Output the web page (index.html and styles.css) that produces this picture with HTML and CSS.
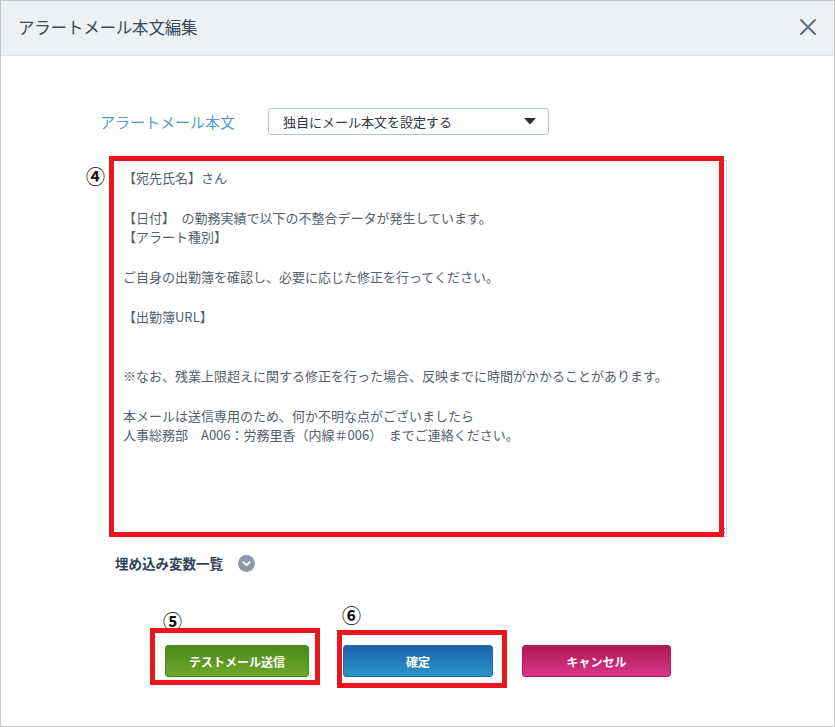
FILE: index.html
```html
<!DOCTYPE html>
<html lang="ja">
<head>
<meta charset="utf-8">
<title>アラートメール本文編集</title>
<link rel="stylesheet" href="styles.css">
</head>
<body>
<div class="dialog">
  <header class="dlg-head">
    <h1 class="dlg-title">アラートメール本文編集</h1>
    <button class="close-btn" aria-label="閉じる">
      <svg width="18" height="18" viewBox="0 0 18 18"><path d="M2 2 L16 16 M16 2 L2 16" stroke="#5b6c7d" stroke-width="1.8" fill="none" stroke-linecap="round"/></svg>
    </button>
  </header>
  <main class="dlg-body">
    <div class="field-row">
      <span class="field-label">アラートメール本文</span>
      <div class="select">
        <span>独自にメール本文を設定する</span>
        <svg class="caret" width="12" height="7" viewBox="0 0 12 7"><path d="M0 0 H12 L6 6.5 Z" fill="#2b2f33"/></svg>
      </div>
    </div>
    <div class="editor">
      <span class="anno-num num-4">④</span>
      <textarea class="mail-body" readonly>【宛先氏名】さん

【日付】　の勤務実績で以下の不整合データが発生しています。
【アラート種別】

ご自身の出勤簿を確認し、必要に応じた修正を行ってください。

【出勤簿URL】


※なお、残業上限超えに関する修正を行った場合、反映までに時間がかかることがあります。

本メールは送信専用のため、何か不明な点がございましたら
人事総務部　A006：労務里香（内線＃006）　までご連絡ください。</textarea>
      <span class="anno-box box-4"></span>
    </div>
    <div class="vars">
      <span>埋め込み変数一覧</span>
      <svg class="chev" width="17" height="17" viewBox="0 0 17 17"><circle cx="8.5" cy="8.5" r="8.5" fill="#8a99aa"/><path d="M5.3 7.2 L8.5 10.2 L11.7 7.2" stroke="#fff" stroke-width="1.8" fill="none" stroke-linecap="round" stroke-linejoin="round"/></svg>
    </div>
    <div class="actions">
      <div class="btn-wrap wrap-test">
        <span class="anno-num num-5">⑤</span>
        <button class="btn btn-green">テストメール送信</button>
        <span class="anno-box box-5"></span>
      </div>
      <div class="btn-wrap wrap-ok">
        <span class="anno-num num-6">⑥</span>
        <button class="btn btn-blue">確定</button>
        <span class="anno-box box-6"></span>
      </div>
      <div class="btn-wrap">
        <button class="btn btn-pink">キャンセル</button>
      </div>
    </div>
  </main>
</div>
</body>
</html>
```
FILE: styles.css
```css
* { box-sizing: border-box; }
html, body { margin: 0; padding: 0; background: #fff; }
body {
  font-family: "Noto Sans CJK JP", "Noto Sans", sans-serif;
  width: 835px;
  height: 727px;
  overflow: hidden;
}
.dialog {
  width: 835px;
  height: 727px;
  border: 1px solid #c6c6c6;
  background: #fff;
  display: flex;
  flex-direction: column;
}
.dlg-head {
  height: 55px;
  flex: none;
  background: #edf1f5;
  border-bottom: 1px solid #dce3e9;
  display: flex;
  align-items: center;
  justify-content: space-between;
  padding: 0 17px 3px 17px;
}
.dlg-title {
  margin: 0;
  font-size: 16.5px;
  font-weight: normal;
  color: #3b4a5a;
  letter-spacing: -0.2px;
}
.close-btn {
  border: 0;
  background: transparent;
  padding: 0;
  width: 18px;
  height: 18px;
  display: flex;
}
.dlg-body {
  flex: 1;
  display: flex;
  flex-direction: column;
}
.field-row {
  display: flex;
  align-items: center;
  margin: 52px 0 0 99px;
}
.field-label {
  width: 168px;
  font-size: 15px;
  color: #4b9bd3;
  line-height: 20px;
}
.select {
  width: 281px;
  height: 27px;
  border: 1px solid #b6c5d2;
  border-radius: 3px;
  padding: 0 12px 0 14px;
  display: flex;
  align-items: center;
  justify-content: space-between;
  font-size: 13px;
  color: #33383d;
}
.editor {
  position: relative;
  margin: 25px 0 0 112px;
  width: 614px;
  height: 377px;
}
.mail-body {
  display: block;
  width: 100%;
  height: 100%;
  margin: 0;
  border: 1px solid #c8d6e4;
  padding: 7px 9px;
  font-family: "Noto Sans CJK JP", "Noto Sans", sans-serif;
  font-size: 13px;
  line-height: 19.8px;
  color: #566069;
  background: #fff;
  outline: none;
  overflow: hidden;
}
.anno-box {
  position: absolute;
  border: 5px solid #e9161f;
  pointer-events: none;
}
.anno-num {
  position: absolute;
  font-size: 19px;
  line-height: 19px;
  font-weight: bold;
  color: #111;
}
.box-4 { left: -4px; top: -4px; width: 615px; height: 381px; }
.num-4 { left: -27px; top: 6px; }
.vars {
  display: flex;
  align-items: center;
  gap: 15px;
  margin: 17px 0 0 114px;
  font-size: 13.5px;
  font-weight: bold;
  color: #2f4258;
  line-height: 18px;
}
.chev { display: block; }
.actions {
  display: flex;
  margin: 73px 0 0 164px;
}
.btn-wrap { position: relative; }
.wrap-test { margin-right: 34px; }
.wrap-ok { margin-right: 29px; }
.btn {
  display: block;
  height: 32px;
  border-radius: 3px;
  font-family: "Noto Sans CJK JP", "Noto Sans", sans-serif;
  font-size: 12px;
  font-weight: bold;
  color: #fff;
  padding: 0;
  cursor: pointer;
}
.btn-green {
  width: 144px;
  border: 1px solid #4b8a1c;
  background: linear-gradient(#4c881b, #6da82b);
}
.btn-blue {
  width: 150px;
  border: 1px solid #2069ac;
  background: linear-gradient(#1d62a8, #2b95ca);
}
.btn-pink {
  width: 149px;
  border: 1px solid #b71d59;
  background: linear-gradient(#b01951, #d9358b);
}
.box-5 { left: -15px; top: -17px; width: 170px; height: 57px; }
.num-5 { left: -2px; top: -34px; }
.box-6 { left: -6px; top: -15px; width: 170px; height: 58px; }
.num-6 { left: -1px; top: -40px; }
```
